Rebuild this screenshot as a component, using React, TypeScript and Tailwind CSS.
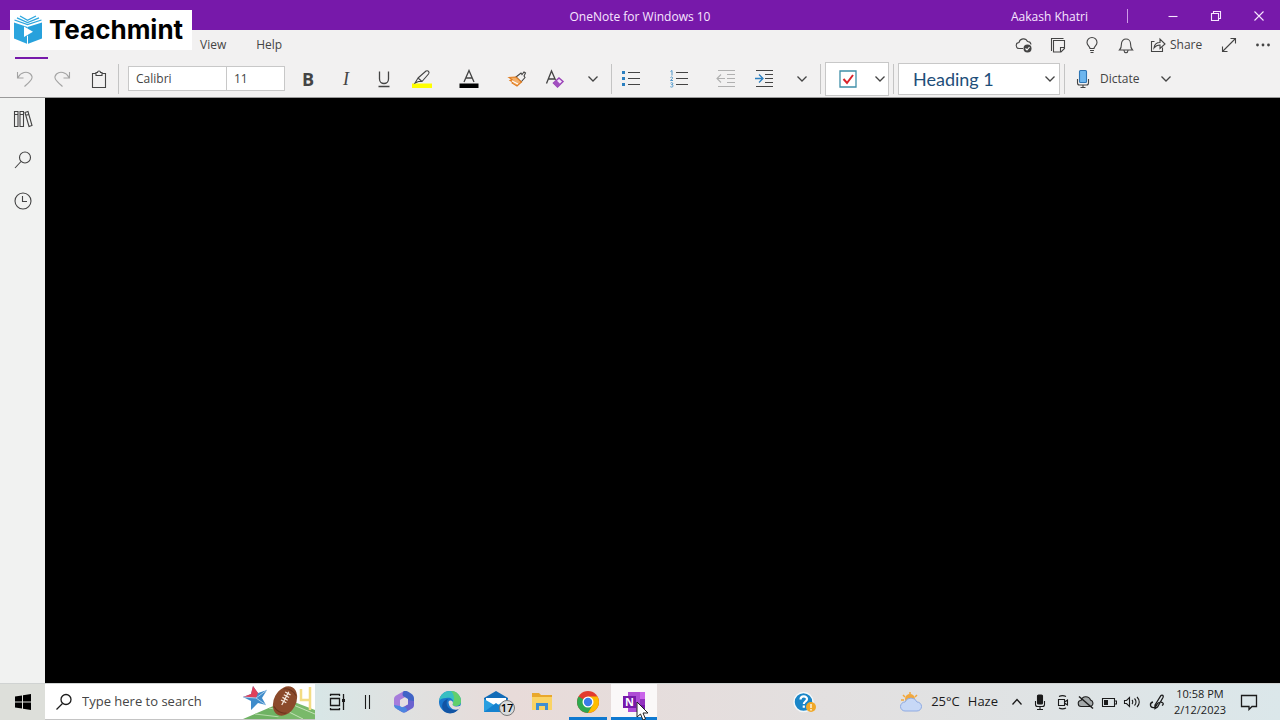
import type { ReactNode } from "react";
import clsx from "clsx";

type IconProps = {
  w?: number;
  h?: number;
  className?: string;
  children: ReactNode;
};

function Icon({ w = 20, h = 20, className, children }: IconProps) {
  return (
    <svg
      width={w}
      height={h}
      viewBox={`0 0 ${w} ${h}`}
      fill="none"
      stroke="currentColor"
      strokeWidth="1.1"
      className={clsx("shrink-0", className)}
      aria-hidden
    >
      {children}
    </svg>
  );
}

type ButtonProps = { label: string; className?: string; children?: ReactNode };

function ToolButton({ label, className, children }: ButtonProps) {
  return (
    <button
      type="button"
      aria-label={label}
      className={clsx("flex h-8 shrink-0 items-center justify-center", className ?? "w-[38px]")}
    >
      {children}
    </button>
  );
}

function Separator() {
  return <span className="h-[30px] w-px shrink-0 bg-[#c4c4c4]" />;
}

function Chevron({ className }: { className?: string }) {
  return (
    <Icon w={12} h={8} className={className}>
      <path d="M1.500 1.500 6 6l4.500-4.500" strokeWidth="1.300" />
    </Icon>
  );
}

function TeachmintLogo() {
  return (
    <div className="absolute left-[10px] top-[10px] flex h-10 w-[182px] items-center gap-[6px] bg-white pl-[3px]">
      <svg width="30" height="30" viewBox="0 0 30 30" className="shrink-0" aria-hidden>
        <path d="M1 7.500 14.500 12v17L1 23.500Z" fill="#2ba5de" />
        <path d="M14.500 12 29 7.500v16L14.500 29Z" fill="#27a1dc" />
        <path
          d="M1.500 5 14.500 9.500 28.500 5M4 2.800 14.500 7.500 26 2.800M7 1 14.500 5.300 23 1"
          fill="none"
          stroke="#2ba5de"
          strokeWidth="1.300"
        />
        <path d="M11 11.500v10.500l9-5.300Z" fill="#fff" />
        <path d="M14.500 21v8" stroke="#fff" />
      </svg>
      <span className="font-['Inter',sans-serif] text-[26px] font-bold leading-10 text-black">
        Teachmint
      </span>
    </div>
  );
}

function TitleBar() {
  return (
    <header className="grid h-[30px] grid-cols-[1fr_auto_1fr] items-center bg-[#7719aa] text-xs text-[#f7e6ff]">
      <span />
      <h1 className="pt-[2px]">OneNote for Windows 10</h1>
      <div className="flex h-full items-center justify-end">
        <span className="pt-[2px]">Aakash Khatri</span>
        <span className="ml-[39px] mr-[23px] h-[14px] w-px bg-[#cf9be8]" />
        <ToolButton label="Minimize" className="w-[43px]">
          <Icon w={12} h={12}><path d="M1.500 6.500h9" /></Icon>
        </ToolButton>
        <ToolButton label="Restore" className="w-[43px]">
          <Icon w={12} h={12}><path d="M1.500 3.500h7v7h-7zM3.500 3.500v-2h7v7h-2" /></Icon>
        </ToolButton>
        <ToolButton label="Close" className="w-[43px]">
          <Icon w={12} h={12}><path d="m1.500 1.500 9 9m0-9-9 9" /></Icon>
        </ToolButton>
      </div>
    </header>
  );
}

function TabRow() {
  return (
    <nav className="flex h-[30px] items-center pl-[15px] text-xs">
      <button type="button" aria-label="Home" className="h-[29px] w-[33px] self-start border-b-2 border-[#7719aa]" />
      <button type="button" className="ml-[152px]">View</button>
      <button type="button" className="ml-[30px]">Help</button>

      <div className="ml-auto flex items-center">
        <ToolButton label="Sync status" className="w-[34px]">
          <Icon w={18} h={18}>
            <path d="M8 12.500H4.500a3 3 0 0 1-.5-6 4.500 4.500 0 0 1 8.500-1 3.500 3.500 0 0 1 3.500 3" />
            <circle cx="12.500" cy="12.500" r="4" fill="#444" stroke="none" />
            <path d="m10.500 12.500 1.500 1.500 2.500-3" stroke="#fff" />
          </Icon>
        </ToolButton>
        <ToolButton label="Feed" className="w-[34px]">
          <Icon w={18} h={18}>
            <path d="M4.500 4.500h11v8l-3.500 3.500H4.500zM15.500 11.500h-4v4M2.500 15V2.500h12" />
          </Icon>
        </ToolButton>
        <ToolButton label="Tell me" className="w-[34px]">
          <Icon w={18} h={18}>
            <path d="M7 12.500c0-2-3-3-3-6a5 5 0 0 1 10 0c0 3-3 4-3 6zM7 14.500h4M7.500 16.500h3" />
          </Icon>
        </ToolButton>
        <ToolButton label="Notifications" className="w-[34px]">
          <Icon w={18} h={18}>
            <path d="M2.500 14c1.500-1.500 2-2.500 2-6.500a4.500 4.500 0 0 1 9 0c0 4 .5 5 2 6.500zM7 14.500c.3 3 3.700 3 4 0" />
          </Icon>
        </ToolButton>
        <button type="button" className="flex w-[69px] items-center gap-1 pl-[7px]">
          <Icon w={16} h={18}>
            <path d="M4.500 5.500h-3v10h11v-4M4 12c.5-4 3-5.500 6-5.500V3l5 5-5 4.500V9c-3 0-4.500 1-6 3Z" />
          </Icon>
          Share
        </button>
        <ToolButton label="Full screen" className="w-[34px]">
          <Icon w={18} h={18}>
            <path d="M3 15 15 3M10.500 2.500h5v5M2.500 10.500v5h5" />
          </Icon>
        </ToolButton>
        <ToolButton label="More" className="w-[34px]">
          <Icon w={18} h={18}>
            <g fill="currentColor" stroke="none">
              <circle cx="3.500" cy="9" r="1.400" />
              <circle cx="9" cy="9" r="1.400" />
              <circle cx="14.500" cy="9" r="1.400" />
            </g>
          </Icon>
        </ToolButton>
      </div>
    </nav>
  );
}

function Toolbar() {
  return (
    <div className="flex h-[38px] items-center border-b border-[#9a9a9a] pl-[6px] text-xs">
      <ToolButton label="Undo" className="w-[37px]">
        <Icon className="text-[#a3a3a3]">
          <path d="M2.500 3v6h6M3 8.500C6 3 12 2 15.500 5c4 4 0 7-6 12.500" />
        </Icon>
      </ToolButton>
      <ToolButton label="Redo" className="w-[37px]">
        <Icon className="text-[#a3a3a3]">
          <path d="M17.500 3v6h-6M17 8.500C14 3 8 2 4.500 5c-4 4 0 7 6 12.500" />
        </Icon>
      </ToolButton>
      <ToolButton label="Paste" className="w-[38px]">
        <Icon>
          <path d="M7 4.500H3.500v14h13v-14H13M7 6.500v-3h1.500a1.500 1.500 0 0 1 3 0H13v3z" />
        </Icon>
      </ToolButton>
      <Separator />

      <div className="ml-[9px] mr-1 flex h-[25px] shrink-0 border border-[#c8c8c8] bg-white">
        <input
          aria-label="Font"
          defaultValue="Calibri"
          className="w-[98px] border-r border-[#c8c8c8] px-[7px] outline-none"
        />
        <input aria-label="Font size" defaultValue="11" className="w-[57px] px-[7px] outline-none" />
      </div>

      <ToolButton label="Bold">
        <span className="text-lg font-bold">B</span>
      </ToolButton>
      <ToolButton label="Italic">
        <span className="font-['Liberation_Serif',serif] text-lg italic">I</span>
      </ToolButton>
      <ToolButton label="Underline">
        <Icon><path d="M5.500 2.500v7.500a4.500 4.500 0 0 0 9 0V2.500M4.500 17.500h11" strokeWidth="1.300" /></Icon>
      </ToolButton>
      <ToolButton label="Highlight">
        <Icon>
          <path d="M0 14.500h20v4.500H0z" fill="#ffff00" stroke="none" />
          <path d="m6 9 8-7c2-1 4 1 2.500 3L10 12.500H6.500L3 14l3-5Zm0 0 4 3.500" />
        </Icon>
      </ToolButton>
      <ToolButton label="Font color" className="ml-[9px] mr-[10px] w-[38px]">
        <Icon>
          <path d="M.5 14.500h19V19H.5z" fill="#000" stroke="none" />
          <path d="m5 13 5-11.500L15 13M6.500 9h7" strokeWidth="1.300" />
        </Icon>
      </ToolButton>
      <ToolButton label="Format painter">
        <Icon>
          <path d="m9 8 5-4 1 1.500L17 3l1.500 1-1.500 3 1 1.500-4 4.500Z" />
          <path d="M9 8 2 8.500l3 2-2 1 3 1.500-1 1 5 3 4.500-4Z" fill="#f3b06c" stroke="#e17d20" />
          <path d="m5 12 6 3" stroke="#fff" />
        </Icon>
      </ToolButton>
      <ToolButton label="Clear formatting">
        <Icon>
          <path d="M1.500 14.500 6.500 2l4 9M3.500 10h6" strokeWidth="1.300" />
          <path d="m8.500 14 5.500-5 4 3.500-5.500 5.500Z" fill="#f4e4fa" stroke="#9b45b8" strokeWidth="1.500" />
          <path d="m8.500 14 3-2.800 4 4-3 2.800Z" fill="#a24fc0" stroke="none" />
        </Icon>
      </ToolButton>
      <ToolButton label="More font options" className="w-[37px]"><Chevron /></ToolButton>
      <Separator />

      <ToolButton label="Bullets">
        <Icon>
          <path d="M7 3.500h12M7 9.500h12M7 15.500h12" />
          <path d="M1 2h3v3H1zM1 8h3v3H1zM1 14h3v3H1z" fill="#2b7fc0" stroke="none" />
        </Icon>
      </ToolButton>
      <ToolButton label="Numbering" className="ml-[10px] mr-[9px] w-[38px]">
        <Icon>
          <path d="M7 3.500h12M7 9.500h12M7 15.500h12" />
          <path
            d="M1.500 2.500 3 1.500v5M1.500 8.500c1-1 2.500-.5 2 .8l-2 2.200H4M1.500 14.200c1-1 2.500-.6 2.300.6-.2.800-1 .8-1.300.8 1.500 0 2 1.300 1.300 2-.7.700-1.700.6-2.500 0"
            stroke="#3c8cc5"
            strokeWidth="0.900"
          />
        </Icon>
      </ToolButton>
      <ToolButton label="Decrease indent">
        <Icon className="text-[#b0b0b0]">
          <path d="M2 1.500h17M11 5.500h8M11 9.500h8M11 13.500h8M2 17.500h17M9 9.500H1.500M5 5.500l-4 4 4 4" />
        </Icon>
      </ToolButton>
      <ToolButton label="Increase indent">
        <Icon>
          <path d="M2 1.500h17M11 5.500h8M11 9.500h8M11 13.500h8M2 17.500h17" />
          <path d="M1 9.500h7.500M5 5.500l4 4-4 4" stroke="#2b7fc0" strokeWidth="1.300" />
        </Icon>
      </ToolButton>
      <ToolButton label="More paragraph options" className="w-[37px]"><Chevron /></ToolButton>
      <Separator />

      <div className="mx-1 flex h-[34px] w-16 shrink-0 items-center border border-[#c8c8c8] bg-white">
        <ToolButton label="To do tag" className="w-11">
          <Icon>
            <path d="M2 2h16v16H2z" stroke="#3f8fa8" strokeWidth="1.300" />
            <path d="m5.500 10 3.500 4 6-8" stroke="#d8232a" strokeWidth="2" />
          </Icon>
        </ToolButton>
        <button type="button" aria-label="More tags" className="pl-1"><Chevron /></button>
      </div>
      <Separator />

      <div className="relative mx-1 shrink-0">
        <select
          aria-label="Style"
          className="h-8 w-[162px] appearance-none border border-[#c8c8c8] bg-white pl-[14px] font-['Lato',sans-serif] text-lg leading-6 text-[#1e4e79] outline-none"
        >
          <option>Heading 1</option>
        </select>
        <Chevron className="pointer-events-none absolute right-1 top-3" />
      </div>
      <Separator />

      <button type="button" className="ml-[10px] flex h-8 items-center gap-[9px]">
        <Icon w={16} h={20}>
          <rect x="4.500" y="1.500" width="7" height="12" rx="1" fill="#6db6ee" stroke="#2f76b5" />
          <path d="M2.500 10v4c0 1 1 2 2 2h7c1 0 2-1 2-2v-4M8 16v2.500M5.500 18.500h5" />
        </Icon>
        Dictate
      </button>
      <ToolButton label="Dictate options" className="ml-2 w-[38px]"><Chevron /></ToolButton>
    </div>
  );
}

function SideRail() {
  return (
    <aside className="flex w-[45px] shrink-0 flex-col bg-[#f1f2f1]">
      <button type="button" aria-label="Notebooks" className="flex h-[41px] items-center justify-center">
        <Icon>
          <path d="M1.500 2.500h3.500v15H1.500zM7 2.500h3.500v15H7zM12 3.500l3-1 4 14-3 1zM1.500 5.500H5M7 5.500h3.500M12.500 6.500l3-1" />
        </Icon>
      </button>
      <button type="button" aria-label="Search notes" className="flex h-[41px] items-center justify-center">
        <Icon>
          <circle cx="12" cy="7.500" r="5.500" />
          <path d="m8 11.500-6 6.500" />
        </Icon>
      </button>
      <button type="button" aria-label="Recent notes" className="flex h-[41px] items-center justify-center">
        <Icon>
          <circle cx="10" cy="10" r="8" />
          <path d="M9.500 5v5.500H14" />
        </Icon>
      </button>
    </aside>
  );
}

function SearchArt() {
  return (
    <svg width="72" height="35" viewBox="0 0 72 35" className="shrink-0" aria-hidden>
      <path d="M0 35 42 17 72 30v5Z" fill="#6fb263" />
      <path d="M12 30 54 35M26 24l46 9" stroke="#b7dba9" />
      <path d="m46 16 26 10v9L34 35Z" fill="#79b96a" />
      <path d="m40 25 20 10M48 20l24 10" stroke="#c4e2b8" />
      <path d="m10 2 5 7 9-3-5 8 4 7-8-2-7 7V17l-8-4 8-3Z" fill="#3f8ccb" />
      <path d="m10 2 5 7-2 5-13-1 8-3Z" fill="#e0405a" />
      <path d="m13 14 11-8M13 14 0 13M13 14l10 7" stroke="#a9cdea" />
      <g transform="rotate(28 42 17)">
        <ellipse cx="42" cy="17" rx="11" ry="15.500" fill="#8b4a2b" />
        <path d="M35 7c4-3 10-3 14 0M35 27c4 3 10 3 14 0" fill="none" stroke="#6b341d" />
        <path d="M41 7v15M38 9h6M38 12h6M38 15h6M38 18h6" stroke="#f6eadf" strokeWidth="1.200" />
      </g>
      <path d="M58 5v11h9V3M67 14v12" fill="none" stroke="#f3dc83" strokeWidth="2.500" />
    </svg>
  );
}

function AppButton({ label, className, active, running, children }: ButtonProps & { active?: boolean; running?: boolean }) {
  return (
    <button
      type="button"
      aria-label={label}
      className={clsx(
        "relative flex h-full shrink-0 items-center justify-center",
        className ?? "w-[46px]",
        active && "bg-white/80",
      )}
    >
      {children}
      {(active || running) && (
        <span
          className={clsx("absolute bottom-0 h-[3px] bg-[#0f79d0]", active ? "inset-x-0" : "inset-x-1")}
        />
      )}
    </button>
  );
}

function TrayButton({ label, children }: ButtonProps) {
  return (
    <button type="button" aria-label={label} className="flex h-full w-[23px] items-center justify-center">
      {children}
    </button>
  );
}

function Taskbar() {
  return (
    <footer className="flex h-[37px] items-center border-t border-[#d0d3d2] bg-linear-to-r from-[#d8e6e6] from-25% via-[#e8dbd9] via-40% to-[#dbe7ea] text-[#1b1b1b]">
      <button
        type="button"
        aria-label="Start"
        className="flex h-full w-[45px] shrink-0 items-center justify-center bg-[#dddfda]"
      >
        <svg width="16" height="16" viewBox="0 0 16 16" className="fill-black" aria-hidden>
          <path d="m0 2.500 7-1v6H0zM8 1.300 16 0v7.500H8zM0 8.500h7v6l-7-1zM8 8.500h8V16l-8-1.300z" />
        </svg>
      </button>

      <label className="flex h-full w-[270px] shrink-0 items-center border-b border-[#c4c4c4] bg-white pl-[10px]">
        <Icon w={18} h={18}>
          <circle cx="11" cy="6.500" r="5" strokeWidth="1.300" />
          <path d="m7.500 10.500-6 6" strokeWidth="1.300" />
        </Icon>
        <input
          aria-label="Search"
          placeholder="Type here to search"
          className="ml-[9px] w-0 grow text-[13px] outline-none placeholder:text-[#454545]"
        />
        <SearchArt />
      </label>

      <AppButton label="Task view" className="w-11">
        <Icon w={18} h={18}>
          <path d="M2 1.500h10M2 16.500h10M2.500 5.500h9v7h-9zM2.500 1v2M11.500 1v2M2.500 15v2M11.500 15v2M15.500 1v16" strokeWidth="1.300" />
          <path d="M14 6h3v3h-3z" fill="currentColor" stroke="none" />
        </Icon>
      </AppButton>
      <AppButton label="Toolbar handle" className="w-[22px]">
        <Icon w={18} h={18}><path d="M4.500 2v14M8.500 2v14" /></Icon>
      </AppButton>
      <AppButton label="Microsoft 365">
        <svg width="22" height="22" viewBox="0 0 22 22" aria-hidden>
          <path d="m11 0-7 4C2 5 1 6 1 8v6c0 2 4 3 6 1V9l7-4V2Z" fill="#a67cdb" />
          <path d="M11 0c2-.5 3 0 7 2.500 2 1.500 3 2.500 3 5V12c-2 1-4 1-6-1V8l-5-3c-1-2 0-4 1-5Z" fill="#3f63c6" />
          <path d="M21 10v4c0 2-1 3-2 3.500L13 21c-1.500.8-2.500.8-4 0l-5-3c3 0 4-.5 6-2l5-3V9Z" fill="#6a62cf" />
          <path d="M1 14c0 2 1 3 2 3.500L9 21c2 1 4 0 5-1 0-3-1-4-4-4-1 .5-2 0-3-1Z" fill="#4c86e0" />
          <path d="m11 7 4 2.200v4L11 15.500l-4-2.300v-4Z" fill="#e6dfe3" />
        </svg>
      </AppButton>
      <AppButton label="Microsoft Edge">
        <svg width="24" height="24" viewBox="0 0 24 24" aria-hidden>
          <circle cx="12" cy="12" r="11" fill="#1876cc" />
          <path d="M1 11C2 4 7 1 12 1c7 0 11 5 11 10 0 4-3 5-6 5-2 0-3-1-2-3 1-4-3-6-7-5-3 0-6 1-7 3Z" fill="#37bfc2" />
          <path d="M13 1c6 0 10 5 10 10 0 4-3 5-6 5-2 0-3-1-2-3 2-4 1-9-2-12Z" fill="#62cf6b" />
          <path d="M10 9c-3 4-1 10 5 11 3 0 5-1 7-3-3 6-10 8-15 5C2 18 4 10 10 9Z" fill="#1254a4" />
          <path d="M10.500 12c1-2 4-2 4.500 1 0 1-1 1.500 0 2.500 2 1.500 5 1 8 0L21 19c-4 2-10 0-10.500-7Z" fill="#e5dbdc" />
        </svg>
      </AppButton>
      <AppButton label="Mail">
        <svg width="24" height="24" viewBox="0 0 24 24" aria-hidden>
          <path d="M0 8 12 1l12 7v14H0Z" fill="#126cb8" />
          <path d="M2 8h20v7H2z" fill="#fff" />
          <path d="m0 9 12 7 12-7v13H0Z" fill="#2a9fe0" />
          <path d="m0 22 12-9 12 9Z" fill="#1582cf" />
        </svg>
        <span className="absolute bottom-1 right-1 flex size-4 items-center justify-center rounded-full border border-[#777] bg-[#d9dcdd] text-[11px] font-semibold text-black">
          17
        </span>
      </AppButton>
      <AppButton label="File Explorer">
        <svg width="22" height="20" viewBox="0 0 22 20" aria-hidden>
          <path d="M1 1h7l2 2h11v5H1z" fill="#e9a82c" />
          <path d="M1 5h20v13H1z" fill="#fad364" />
          <path d="M5 11h12v7h-3v-4H8v4H5z" fill="#3f8fd2" />
        </svg>
      </AppButton>
      <AppButton label="Google Chrome" running>
        <svg width="24" height="24" viewBox="0 0 24 24" aria-hidden>
          <circle cx="12" cy="12" r="11" fill="#e33b2e" />
          <path d="M2.500 6.500A11 11 0 0 0 12 23l5-8-5-3Z" fill="#2da94f" />
          <path d="M12 23A11 11 0 0 0 21.500 6.500H12l5 8Z" fill="#fdbd00" />
          <circle cx="12" cy="12" r="5.500" fill="#fff" />
          <circle cx="12" cy="12" r="4.200" fill="#3a7ce8" />
        </svg>
      </AppButton>
      <AppButton label="OneNote" active>
        <svg width="24" height="22" viewBox="0 0 24 22" aria-hidden>
          <path d="M6 1h17v20H6z" fill="#ae4bd5" />
          <path d="M18 1h5v7h-5z" fill="#ca64ea" />
          <path d="M18 8h5v6h-5z" fill="#9332bf" />
          <path d="M18 14h5v7h-5z" fill="#7719aa" />
          <path d="M1 5h13v12H1z" fill="#7719aa" />
          <text x="3" y="15" fill="#fff" fontSize="11" fontWeight="700" fontFamily="Open Sans, sans-serif">
            N
          </text>
        </svg>
        <svg width="14" height="20" viewBox="0 0 14 20" className="absolute left-[25px] top-[17px] z-10" aria-hidden>
          <path d="M1 1v15l3.500-3 2.500 6 2.500-1-2.500-6h5Z" fill="#fff" stroke="#222" />
        </svg>
      </AppButton>

      <button type="button" aria-label="Get help" className="ml-auto mr-[82px]">
        <svg width="24" height="22" viewBox="0 0 24 22" aria-hidden>
          <circle cx="10.500" cy="11" r="9.500" fill="#1a86c8" stroke="#f4f8fa" strokeWidth="1.500" />
          <path d="M7.500 8.500c0-4 6.500-4 6.500-.5 0 2.500-3.200 2.500-3.200 5M10.800 14.500v2.300" fill="none" stroke="#fff" strokeWidth="2.200" />
          <circle cx="18" cy="16" r="5" fill="#f0a828" />
          <path d="M18 13v4M18 18v1.500" stroke="#fff" strokeWidth="1.300" />
        </svg>
      </button>

      <button type="button" className="flex h-full items-center gap-2 pr-[7px] text-[13px]">
        <svg width="24" height="22" viewBox="0 0 24 22" aria-hidden>
          <circle cx="11" cy="8" r="5" fill="#f2a83c" />
          <path d="M11 1v2M4 4l2 2M18 4l-2 2M2 9h3" stroke="#f2a83c" strokeWidth="1.500" />
          <path d="M6 20a4.500 4.500 0 0 1 0-9 6.500 6.500 0 0 1 12 0 4.500 4.500 0 0 1 0 9Z" fill="#c7d8f6" stroke="#8fabe2" />
        </svg>
        <span>25°C</span>
        <span>Haze</span>
      </button>

      <div className="flex h-full items-center">
        <TrayButton label="Show hidden icons">
          <Icon w={12} h={8}><path d="m1.500 6.500 4.500-5 4.500 5" strokeWidth="1.300" /></Icon>
        </TrayButton>
        <TrayButton label="Microphone">
          <Icon w={14} h={16}>
            <rect x="4.500" y="1" width="5" height="9" rx="1" fill="currentColor" />
            <path d="M2.500 7v3.500c0 1 1 2 2 2h5c1 0 2-1 2-2V7M7 12.500v3M4 15.500h6" />
          </Icon>
        </TrayButton>
        <TrayButton label="Meet now">
          <Icon w={14} h={16}>
            <path d="M2.500 5.500h6v6h-6zM8.500 8l3-2v5l-3-2M3 2.500c2-1 5-1 7 0M3 14c2 1 5 1 7 0" />
          </Icon>
        </TrayButton>
        <TrayButton label="OneDrive">
          <Icon w={18} h={16}>
            <path d="M4.500 12.500a3 3 0 0 1-.5-6 5 5 0 0 1 9.500-.5 3.500 3.500 0 0 1 .5 6.500Z" fill="#a4a9aa" />
            <path d="m2 2.500 14 12" strokeWidth="1.500" />
          </Icon>
        </TrayButton>
        <TrayButton label="Battery">
          <Icon w={16} h={14}>
            <path d="M1.500 3.500h12v8h-12zM14 6h1.500v3H14" />
            <path d="M3 5h4v5H3z" fill="currentColor" stroke="none" />
          </Icon>
        </TrayButton>
        <TrayButton label="Volume">
          <Icon w={18} h={16}>
            <path d="M1.500 6.500h2l3-3v9l-3-3h-2zM9 6c1 1 1 3 0 4M11.500 4.500c2 2 2 5 0 7M14 3c3 3 3 7 0 10" />
          </Icon>
        </TrayButton>
        <button type="button" aria-label="Windows Ink" className="flex h-full w-[30px] items-center justify-center">
          <Icon w={18} h={18}>
            <path d="M4 9c-4 1-3 6 1 5.500 3-.5 2-4 5-5s6 1 3 3M6 12 12 2.500c1-1 3 0 2 2L8.500 14 6 15.500Z" strokeWidth="1.300" />
          </Icon>
        </button>
      </div>

      <button type="button" className="flex w-[54px] flex-col items-center text-[11px] leading-4">
        <span>10:58 PM</span>
        <span>2/12/2023</span>
      </button>
      <button type="button" aria-label="Action center" className="mr-[9px] flex h-full w-11 items-center justify-center">
        <Icon w={18} h={18}>
          <path d="M1.500 2.500h15v11H12l-3 3v-3H1.500Z" strokeWidth="1.300" />
        </Icon>
      </button>
    </footer>
  );
}

export default function App() {
  return (
    <div className="relative flex min-h-screen flex-col bg-[#f2f1f1] font-['Open_Sans',sans-serif] text-[#444]">
      <TitleBar />
      <TabRow />
      <Toolbar />
      <div className="flex grow">
        <SideRail />
        <main className="grow bg-black" />
      </div>
      <Taskbar />
      <TeachmintLogo />
    </div>
  );
}
